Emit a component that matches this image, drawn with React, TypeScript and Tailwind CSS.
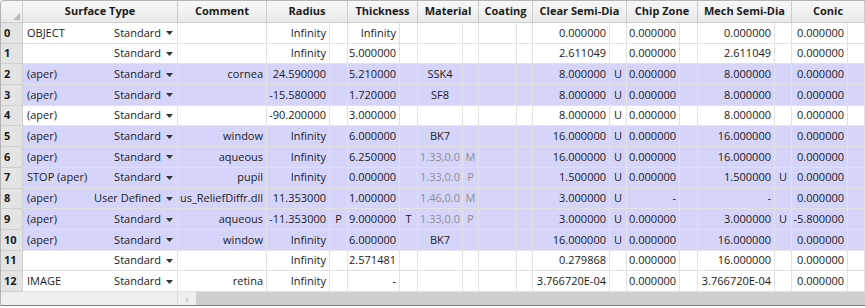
const COLS =
  "grid grid-cols-[22px_155px_89px_63px_18px_52px_18px_45px_16px_38px_16px_77px_17px_53px_18px_77px_17px_56px_1fr]";

type Row = {
  name: string;
  type: string;
  comment: string;
  radius: string;
  rs?: string;
  thick: string;
  ts?: string;
  mat: string;
  matGray?: boolean;
  ms?: string;
  clear: string;
  cs?: string;
  chip: string;
  mech: string;
  mechS?: string;
  conic: string;
  hl: boolean;
};

const rows: Row[] = [
  { name: "OBJECT", type: "Standard", comment: "", radius: "Infinity", thick: "Infinity", mat: "", clear: "0.000000", chip: "0.000000", mech: "0.000000", conic: "0.000000", hl: false },
  { name: "", type: "Standard", comment: "", radius: "Infinity", thick: "5.000000", mat: "", clear: "2.611049", chip: "0.000000", mech: "2.611049", conic: "0.000000", hl: false },
  { name: "(aper)", type: "Standard", comment: "cornea", radius: "24.590000", thick: "5.210000", mat: "SSK4", clear: "8.000000", cs: "U", chip: "0.000000", mech: "8.000000", conic: "0.000000", hl: true },
  { name: "(aper)", type: "Standard", comment: "", radius: "-15.580000", thick: "1.720000", mat: "SF8", clear: "8.000000", cs: "U", chip: "0.000000", mech: "8.000000", conic: "0.000000", hl: true },
  { name: "(aper)", type: "Standard", comment: "", radius: "-90.200000", thick: "3.000000", mat: "", clear: "8.000000", cs: "U", chip: "0.000000", mech: "8.000000", conic: "0.000000", hl: false },
  { name: "(aper)", type: "Standard", comment: "window", radius: "Infinity", thick: "6.000000", mat: "BK7", clear: "16.000000", cs: "U", chip: "0.000000", mech: "16.000000", conic: "0.000000", hl: true },
  { name: "(aper)", type: "Standard", comment: "aqueous", radius: "Infinity", thick: "6.250000", mat: "1.33,0.0", matGray: true, ms: "M", clear: "16.000000", cs: "U", chip: "0.000000", mech: "16.000000", conic: "0.000000", hl: true },
  { name: "STOP (aper)", type: "Standard", comment: "pupil", radius: "Infinity", thick: "0.000000", mat: "1.33,0.0", matGray: true, ms: "P", clear: "1.500000", cs: "U", chip: "0.000000", mech: "1.500000", mechS: "U", conic: "0.000000", hl: true },
  { name: "(aper)", type: "User Defined", comment: "us_ReliefDiffr.dll", radius: "11.353000", thick: "1.000000", mat: "1.46,0.0", matGray: true, ms: "M", clear: "3.000000", cs: "U", chip: "-", mech: "-", conic: "0.000000", hl: true },
  { name: "(aper)", type: "Standard", comment: "aqueous", radius: "-11.353000", rs: "P", thick: "9.000000", ts: "T", mat: "1.33,0.0", matGray: true, ms: "P", clear: "3.000000", cs: "U", chip: "0.000000", mech: "3.000000", mechS: "U", conic: "-5.800000", hl: true },
  { name: "(aper)", type: "Standard", comment: "window", radius: "Infinity", thick: "6.000000", mat: "BK7", clear: "16.000000", cs: "U", chip: "0.000000", mech: "16.000000", conic: "0.000000", hl: true },
  { name: "", type: "Standard", comment: "", radius: "Infinity", thick: "2.571481", mat: "", clear: "0.279868", chip: "0.000000", mech: "16.000000", conic: "0.000000", hl: false },
  { name: "IMAGE", type: "Standard", comment: "retina", radius: "Infinity", thick: "-", mat: "", clear: "3.766720E-04", chip: "0.000000", mech: "3.766720E-04", conic: "0.000000", hl: false },
];

const Cell = ({ v, align = "end", gray }: { v?: string; align?: "end" | "center" | "start"; gray?: boolean }) => (
  <div
    className={
      "flex items-center border-r border-b border-[#e2e2e2] px-[3px] whitespace-nowrap overflow-hidden " +
      (align === "end" ? "justify-end" : align === "center" ? "justify-center" : "justify-start") +
      (gray ? " text-[#8e8e8e]" : "")
    }
  >
    {v}
  </div>
);

const Arrow = () => (
  <svg width="7" height="4" viewBox="0 0 7 4" className="ml-[5px] mt-[1px]">
    <path d="M0 0h7L3.5 4z" fill="#333" />
  </svg>
);

const Head = ({ label, span }: { label: string; span?: boolean }) => (
  <div
    className={
      "flex items-center justify-center border-r border-b border-[#cdcdcd] font-bold " +
      (span ? "col-span-2" : "")
    }
  >
    {label}
  </div>
);

export default function App() {
  return (
    <div className="w-[865px] h-[308px] bg-white overflow-hidden text-[11px] text-[#1b1b1b] font-['Open_Sans',sans-serif]">
      <div className="border-t border-l border-[#b4b4b4] rounded-tl-[4px] overflow-hidden">
        <div className={COLS + " h-[22px] bg-gradient-to-b from-[#f8f8f8] to-[#e9e9e9]"}>
          <div className="relative border-r border-b border-[#cdcdcd]">
            <svg width="7" height="7" viewBox="0 0 7 7" className="absolute right-[2px] bottom-[2px]">
              <path d="M7 0V7H0z" fill="#b9b9b9" />
            </svg>
          </div>
          <Head label="Surface Type" />
          <Head label="Comment" />
          <Head label="Radius" span />
          <Head label="Thickness" span />
          <Head label="Material" span />
          <Head label="Coating" span />
          <Head label="Clear Semi-Dia" span />
          <Head label="Chip Zone" span />
          <Head label="Mech Semi-Dia" span />
          <Head label="Conic" span />
        </div>
        <div className="grid grid-rows-[repeat(13,minmax(0,1fr))] h-[269px]">
          {rows.map((r, i) => (
            <div key={i} className={COLS + (r.hl ? " bg-[#d5d5fb]" : " bg-white")}>
              <div className="flex items-center pl-[3px] font-bold bg-[#e4e4e4] border-r border-b border-[#cfcfcf]">
                {i}
              </div>
              <div className="flex items-center justify-between pl-[4px] pr-[4px] border-r border-b border-[#e2e2e2] whitespace-nowrap">
                <span>{r.name}</span>
                <span className="flex items-center">
                  {r.type}
                  <Arrow />
                </span>
              </div>
              <Cell v={r.comment} />
              <Cell v={r.radius} />
              <Cell v={r.rs} align="center" />
              <Cell v={r.thick} />
              <Cell v={r.ts} align="center" />
              <Cell v={r.mat} align="center" gray={r.matGray} />
              <Cell v={r.ms} align="center" gray />
              <Cell />
              <Cell />
              <Cell v={r.clear} />
              <Cell v={r.cs} align="center" />
              <Cell v={r.chip} />
              <Cell />
              <Cell v={r.mech} />
              <Cell v={r.mechS} align="center" />
              <Cell v={r.conic} />
              <Cell />
            </div>
          ))}
        </div>
        <div className="flex h-[14px] border-b border-[#76828e]">
          <div className="w-[177px] bg-[#efefef] border-r border-[#dcdcdc]" />
          <div className="w-[18px] flex items-center justify-center bg-[#efefef] text-[#a8a8a8] text-[10px] leading-none">
            ‹
          </div>
          <div className="flex-1 bg-[#cfcfcf]" />
        </div>
      </div>
    </div>
  );
}
